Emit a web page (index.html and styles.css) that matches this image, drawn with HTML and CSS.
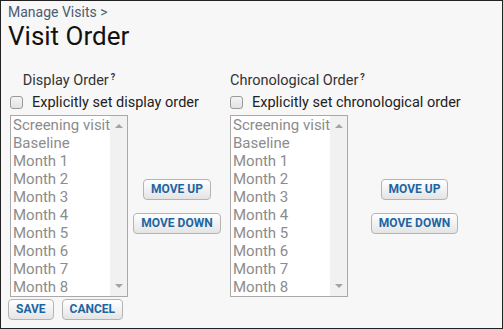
FILE: index.html
```html
<!DOCTYPE html>
<html lang="en">

<head>
  <meta charset="UTF-8" />
  <meta name="viewport" content="width=device-width, initial-scale=1.0" />
  <title>Visit Order</title>
  <link rel="stylesheet" href="styles.css">
</head>

<body>
  <div class="page">
    <div class="crumb"><a href="#">Manage Visits</a> &gt;</div>
    <h1>Visit Order</h1>

    <div class="orders">
      <div class="order-col">
        <div class="order-title centered">Display Order<sup class="help">?</sup></div>
        <label class="explicit"><input type="checkbox" />Explicitly set display order</label>
        <div class="order-body">
          <div class="listbox">
            <ul class="items">
              <li>Screening visit</li>
              <li>Baseline</li>
              <li>Month 1</li>
              <li>Month 2</li>
              <li>Month 3</li>
              <li>Month 4</li>
              <li>Month 5</li>
              <li>Month 6</li>
              <li>Month 7</li>
              <li>Month 8</li>
            </ul>
            <div class="scrollbar"><span class="arrow up"></span><span class="arrow down"></span></div>
          </div>
          <div class="move-btns">
            <button class="btn">Move Up</button>
            <button class="btn">Move Down</button>
          </div>
        </div>
      </div>

      <div class="order-col">
        <div class="order-title">Chronological Order<sup class="help">?</sup></div>
        <label class="explicit"><input type="checkbox" />Explicitly set chronological order</label>
        <div class="order-body">
          <div class="listbox">
            <ul class="items">
              <li>Screening visit</li>
              <li>Baseline</li>
              <li>Month 1</li>
              <li>Month 2</li>
              <li>Month 3</li>
              <li>Month 4</li>
              <li>Month 5</li>
              <li>Month 6</li>
              <li>Month 7</li>
              <li>Month 8</li>
            </ul>
            <div class="scrollbar"><span class="arrow up"></span><span class="arrow down"></span></div>
          </div>
          <div class="move-btns wide">
            <button class="btn">Move Up</button>
            <button class="btn">Move Down</button>
          </div>
        </div>
      </div>
    </div>

    <div class="actions">
      <button class="btn">Save</button>
      <button class="btn">Cancel</button>
    </div>
  </div>
</body>

</html>
```

FILE: styles.css
```css
body {
  margin: 0;
  font-family: Roboto, "Liberation Sans", Arial, sans-serif;
  color: #222;
}

.page {
  width: 503px;
  height: 329px;
  box-sizing: border-box;
  border: 1px solid #222;
  background: #f7f7f7;
  padding: 0 7px;
  overflow: hidden;
}

.crumb {
  font-size: 14px;
  line-height: 16px;
  margin-top: 3px;
  color: #4c5b70;
}

.crumb a {
  color: #4c5b70;
  text-decoration: none;
}

h1 {
  font-size: 26px;
  font-weight: normal;
  line-height: 28px;
  margin: 2px 0 0;
  color: #111;
}

.orders {
  display: flex;
  gap: 4px;
  margin: 23px 0 0 2px;
}

.order-title {
  font-size: 14.5px;
  line-height: 16px;
  color: #333;
  white-space: nowrap;
}

.order-title.centered {
  width: 118px;
  text-align: center;
}

.help {
  font-size: 9px;
  font-weight: bold;
  margin-left: 2px;
  vertical-align: 5px;
  line-height: 0;
}

.explicit {
  display: flex;
  align-items: center;
  height: 18px;
  margin-top: 4px;
  font-size: 14.5px;
  white-space: nowrap;
}

.explicit input {
  appearance: none;
  width: 13px;
  height: 13px;
  margin: 0 9px 0 0;
  border: 1px solid #9a9a9a;
  border-radius: 3px;
  background: linear-gradient(#f4f4f4, #e2e2e2);
}

.order-body {
  display: flex;
  margin-top: 4px;
}

.listbox {
  display: flex;
  width: 118px;
  height: 182px;
  box-sizing: border-box;
  border: 1px solid #a9a9a9;
  background: #fff;
}

.items {
  flex: 1;
  list-style: none;
  margin: 0;
  padding: 0 0 0 2px;
  font-size: 15px;
  line-height: 18px;
  color: #8c8c8c;
  overflow: hidden;
  white-space: nowrap;
}

.scrollbar {
  position: relative;
  width: 17px;
  background: #f1f1f1;
}

.arrow {
  position: absolute;
  left: 5px;
  width: 0;
  height: 0;
  border-left: 4px solid transparent;
  border-right: 4px solid transparent;
}

.arrow.up {
  top: 8px;
  border-bottom: 4px solid #a3a3a3;
}

.arrow.down {
  bottom: 8px;
  border-top: 4px solid #a3a3a3;
}

.move-btns {
  width: 98px;
  display: flex;
  flex-direction: column;
  align-items: center;
  justify-content: center;
  gap: 13px;
}

.move-btns.wide {
  width: 133px;
}

.btn {
  font-family: Roboto, "Liberation Sans", Arial, sans-serif;
  font-size: 12px;
  font-weight: bold;
  text-transform: uppercase;
  line-height: 19px;
  padding: 0 7px;
  color: #1d65a2;
  border: 1px solid #b4b4b4;
  border-radius: 4px;
  background: linear-gradient(#ffffff, #e4e4e4);
  cursor: pointer;
}

.actions {
  display: flex;
  gap: 8px;
  margin-top: 2px;
}
```
